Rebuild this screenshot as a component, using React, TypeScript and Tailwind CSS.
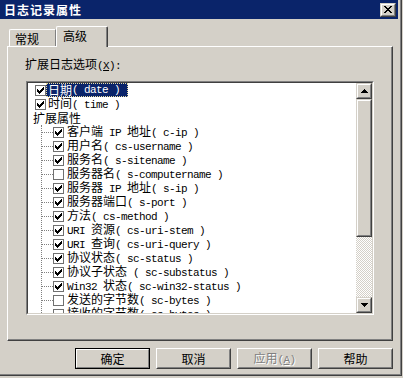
import React from "react";

const ASCII = /^[\x20-\x7e]+$/;

function Txt({ s }: { s: string }) {
  const parts = s.split(/([\x20-\x7e]+)/).filter((p) => p.length > 0);
  return (
    <>
      {parts.map((p, i) =>
        ASCII.test(p) ? (
          <span
            key={i}
            className="whitespace-pre font-['Liberation_Mono',monospace] text-[11px] tracking-[-0.6px]"
          >
            {p}
          </span>
        ) : (
          <span key={i}>{p}</span>
        )
      )}
    </>
  );
}

function CheckMark() {
  const cols: [number, number][] = [
    [2, 3],
    [3, 3],
    [4, 3],
    [3, 3],
    [2, 3],
    [1, 3],
    [0, 3],
  ];
  return (
    <svg width="7" height="7" viewBox="0 0 7 7" shapeRendering="crispEdges">
      {cols.map(([y, h], x) => (
        <rect key={x} x={x} y={y} width={1} height={h} fill="#000" />
      ))}
    </svg>
  );
}

function Box({ checked }: { checked: boolean }) {
  return (
    <div className="w-[11px] h-[11px] flex-none border border-[#707070] bg-white flex items-center justify-center">
      {checked ? <CheckMark /> : null}
    </div>
  );
}

function Arrow({ up }: { up: boolean }) {
  return (
    <svg width="7" height="4" viewBox="0 0 7 4" shapeRendering="crispEdges">
      {up ? (
        <path d="M3 0h1v1h1v1h1v1h1v1H0V3h1V2h1V1h1z" fill="#000" />
      ) : (
        <path d="M0 0h7v1H6v1H5v1H4v1H3V3H2V2H1V1H0z" fill="#000" />
      )}
    </svg>
  );
}

function Raised({ className, children }: { className: string; children?: React.ReactNode }) {
  return (
    <div
      className={
        "flex-none bg-[#d4d0c8] border border-t-[#d4d0c8] border-l-[#d4d0c8] border-r-[#404040] border-b-[#404040] " +
        className
      }
    >
      <div className="w-full h-full border border-t-white border-l-white border-r-[#808080] border-b-[#808080] flex items-center justify-center">
        {children}
      </div>
    </div>
  );
}

function CloseX() {
  const rows = [0, 1, 2, 3, 4, 5, 6];
  return (
    <svg width="8" height="7" viewBox="0 0 8 7" shapeRendering="crispEdges">
      {rows.map((i) => (
        <React.Fragment key={i}>
          <rect x={i} y={i} width={2} height={1} fill="#000" />
          <rect x={6 - i} y={i} width={2} height={1} fill="#000" />
        </React.Fragment>
      ))}
    </svg>
  );
}

function Button({
  label,
  isDefault,
  disabled,
}: {
  label: React.ReactNode;
  isDefault?: boolean;
  disabled?: boolean;
}) {
  if (isDefault) {
    return (
      <div className="w-[75px] h-[21px] flex-none border border-black bg-[#d4d0c8]">
        <div className="w-full h-full border border-t-white border-l-white border-r-[#808080] border-b-[#808080] flex items-center justify-center">
          {label}
        </div>
      </div>
    );
  }
  return (
    <div className="w-[75px] h-[21px] flex-none bg-[#d4d0c8]">
      <div className="w-full h-full border border-t-white border-l-white border-r-[#404040] border-b-[#404040]">
        <div
          className={
            "w-full h-full border border-t-[#d4d0c8] border-l-[#d4d0c8] border-r-[#808080] border-b-[#808080] flex items-center justify-center " +
            (disabled ? "text-[#808080] [text-shadow:1px_1px_0_#fff]" : "text-black")
          }
        >
          {label}
        </div>
      </div>
    </div>
  );
}

const children: [string, boolean][] = [
  ["客户端 IP 地址( c-ip )", true],
  ["用户名( cs-username )", true],
  ["服务名( s-sitename )", true],
  ["服务器名( s-computername )", false],
  ["服务器 IP 地址( s-ip )", true],
  ["服务器端口( s-port )", true],
  ["方法( cs-method )", true],
  ["URI 资源( cs-uri-stem )", true],
  ["URI 查询( cs-uri-query )", true],
  ["协议状态( sc-status )", true],
  ["协议子状态 ( sc-substatus )", true],
  ["Win32 状态( sc-win32-status )", true],
  ["发送的字节数( sc-bytes )", false],
  ["接收的字节数( cs-bytes )", false],
];

export default function App() {
  return (
    <div className="w-[403px] h-[378px] overflow-hidden bg-[#d4d0c8] text-black text-[12px] leading-[14px] font-['Noto_Sans_CJK_SC','Noto_Sans_CJK_JP',sans-serif]">
      <div className="w-[402px] h-[376px] border-r border-b border-r-[#404040] border-b-[#404040]">
        <div className="w-full h-full border-r border-b border-r-[#808080] border-b-[#808080] pr-[2px] pb-[2px] flex flex-col">
          {/* Title bar */}
          <div className="h-[19px] flex-none bg-[#0a246a] flex items-center pl-[4px] pr-[2px]">
            <span className="flex-1 text-white font-bold text-[12px] tracking-[1px]">日志记录属性</span>
            <Raised className="w-[16px] h-[14px]">
              <CloseX />
            </Raised>
          </div>

          {/* Tabs */}
          <div className="mt-[7px] ml-[7px] h-[21px] -mb-px relative z-10 flex items-end pl-[2px] flex-none">
            <div className="w-[47px] h-[17px] mb-px border-l border-t border-r border-l-white border-t-white border-r-[#808080] rounded-tl-[2px] pl-[5px] pt-[2px]">
              常规
            </div>
            <div className="w-[52px] h-[21px] bg-[#d4d0c8] border-l border-t border-r border-l-white border-t-white border-r-[#404040] rounded-tl-[2px] rounded-tr-[2px]">
              <div className="h-full border-r border-r-[#808080] pl-[6px] pt-[2px]">高级</div>
            </div>
          </div>

          {/* Panel */}
          <div className="ml-[7px] w-[386px] h-[295px] flex-none border border-t-white border-l-white border-r-[#404040] border-b-[#404040]">
            <div className="h-full border-r border-b border-r-[#808080] border-b-[#808080] pl-[17px] pt-[10px] flex flex-col">
              <div className="h-[14px]">
                扩展日志选项
                <span className="whitespace-pre font-['Liberation_Mono',monospace] text-[11px] tracking-[-0.6px]">
                  (<span className="underline">X</span>):
                </span>
              </div>
              {/* Listbox */}
              <div className="mt-[10px] ml-[1px] w-[348px] h-[234px] flex-none border border-t-[#808080] border-l-[#808080] border-r-white border-b-white">
                <div className="w-full h-full border border-t-[#404040] border-l-[#404040] border-r-[#d4d0c8] border-b-[#d4d0c8] flex bg-white">
                  <div className="flex-1 overflow-hidden flex flex-col">
                    <div className="h-[14px] flex-none flex items-center pl-[7px]">
                      <Box checked />
                      <span className="h-[14px] pl-[2px] pr-[8px] bg-[#0a246a] text-white outline outline-1 outline-dotted outline-[#e8dca0] -outline-offset-1 flex items-center">
                        <Txt s="日期( date )" />
                      </span>
                    </div>
                    <div className="h-[14px] flex-none flex items-center pl-[7px]">
                      <Box checked />
                      <span className="pl-[2px]">
                        <Txt s="时间( time )" />
                      </span>
                    </div>
                    <div className="h-[14px] flex-none flex items-center pl-[5px]">扩展属性</div>
                    <div className="ml-[13px] border-l border-dotted border-l-[#808080] flex flex-col">
                      {children.map(([t, c], i) => (
                        <div key={i} className="h-[14px] flex-none flex items-center">
                          <div className="w-[11px] h-0 flex-none border-t border-dotted border-t-[#808080]" />
                          <Box checked={c} />
                          <span className="ml-[3px] whitespace-nowrap">
                            <Txt s={t} />
                          </span>
                        </div>
                      ))}
                    </div>
                  </div>
                  {/* Scrollbar */}
                  <div className="w-[16px] flex-none flex flex-col">
                    <Raised className="w-[16px] h-[16px]">
                      <Arrow up />
                    </Raised>
                    <Raised className="w-[16px] h-[138px]" />
                    <div className="flex-1 bg-[repeating-conic-gradient(#d4d0c8_0_25%,#ffffff_0_50%)] bg-[length:2px_2px]" />
                    <Raised className="w-[16px] h-[16px]">
                      <Arrow up={false} />
                    </Raised>
                  </div>
                </div>
              </div>
            </div>
          </div>

          {/* Buttons */}
          <div className="mt-[7px] flex justify-end gap-[6px] pr-[5px] flex-none">
            <Button label="确定" isDefault />
            <Button label="取消" />
            <Button
              disabled
              label={
                <span>
                  应用
                  <span className="whitespace-pre font-['Liberation_Mono',monospace] text-[11px] tracking-[-0.6px]">
                    (<span className="underline">A</span>)
                  </span>
                </span>
              }
            />
            <Button label="帮助" />
          </div>
        </div>
      </div>
    </div>
  );
}
